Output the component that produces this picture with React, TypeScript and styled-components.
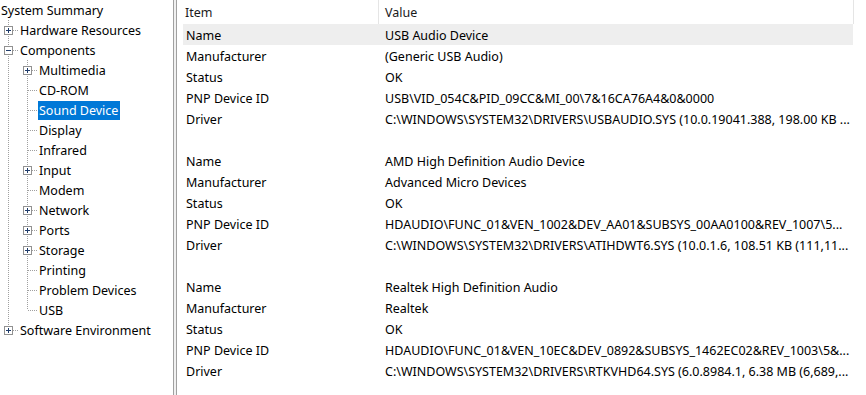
import React from 'react'
import styled, { createGlobalStyle } from 'styled-components'

const GlobalStyle = createGlobalStyle`
  html, body {
    margin: 0;
    padding: 0;
    background: #ffffff;
  }
  body {
    font-family: 'Noto Sans', 'Open Sans', sans-serif;
    font-size: 12.5px;
    color: #000000;
  }
`

const Window = styled.div`
  display: flex;
  width: 866px;
  height: 395px;
  overflow: hidden;
  background: #ffffff;
`

const TreePane = styled.div`
  width: 173px;
  flex: none;
  display: flex;
  flex-direction: column;
`

const Splitter = styled.div`
  width: 2px;
  flex: none;
  background: #f0f0f0;
  border-left: 1px solid #a0a0a0;
  border-right: 1px solid #a0a0a0;
`

const TreeRow = styled.div`
  display: flex;
  align-items: center;
  height: 20px;
`

const Gutter = styled.svg`
  width: 19px;
  height: 20px;
  flex: none;
  display: block;
`

const TreeLabel = styled.span<{ $selected?: boolean }>`
  height: 19px;
  line-height: 20px;
  padding: 0 2px 0 1px;
  white-space: nowrap;
  background: ${(p) => (p.$selected ? '#0078d7' : 'transparent')};
  color: ${(p) => (p.$selected ? '#ffffff' : '#000000')};
`

const ListPane = styled.div`
  flex: 1;
  padding-left: 6px;
  display: flex;
  flex-direction: column;
  min-width: 0;
`

const HeaderRow = styled.div`
  display: flex;
  height: 24px;
`

const HeaderCell = styled.div<{ $width: number; $pad: number }>`
  width: ${(p) => p.$width}px;
  flex: none;
  box-sizing: border-box;
  display: flex;
  align-items: center;
  padding-left: ${(p) => p.$pad}px;
  border-right: 1px solid #e5e5e5;
  color: #1a1a1a;
`

const DataRow = styled.div<{ $hot?: boolean }>`
  display: flex;
  height: 21px;
  line-height: 23px;
  width: 670px;
  background: ${(p) => (p.$hot ? '#eeeeee' : 'transparent')};
`

const Cell = styled.div<{ $width: number; $pad: number }>`
  width: ${(p) => p.$width}px;
  flex: none;
  box-sizing: border-box;
  padding-left: ${(p) => p.$pad}px;
  white-space: nowrap;
  overflow: hidden;
`

type Guide = 'pipe' | 'tee' | 'elbow'
type Expander = 'plus' | 'minus'

const GuideCell = ({ kind, box }: { kind?: Guide; box?: Expander }) => (
  <Gutter viewBox="0 0 19 20">
    {kind && (
      <line
        x1="8.5"
        y1="0"
        x2="8.5"
        y2={kind === 'elbow' ? 10 : 20}
        stroke="#a0a0a0"
        strokeDasharray="1 1"
      />
    )}
    {kind && kind !== 'pipe' && (
      <line x1={box ? 13 : 9} y1="10.5" x2="18" y2="10.5" stroke="#a0a0a0" strokeDasharray="1 1" />
    )}
    {box && (
      <g>
        <rect x="4.5" y="6.5" width="8" height="8" fill="#ffffff" stroke="#919191" />
        <line x1="6" y1="10.5" x2="11" y2="10.5" stroke="#1f3c6b" />
        {box === 'plus' && <line x1="8.5" y1="8" x2="8.5" y2="13" stroke="#1f3c6b" />}
      </g>
    )}
  </Gutter>
)

type Node = {
  label: string
  guides: { kind?: Guide; box?: Expander }[]
  selected?: boolean
}

const tree: Node[] = [
  { label: 'System Summary', guides: [] },
  { label: 'Hardware Resources', guides: [{ kind: 'tee', box: 'plus' }] },
  { label: 'Components', guides: [{ kind: 'tee', box: 'minus' }] },
  { label: 'Multimedia', guides: [{ kind: 'pipe' }, { kind: 'tee', box: 'plus' }] },
  { label: 'CD-ROM', guides: [{ kind: 'pipe' }, { kind: 'tee' }] },
  { label: 'Sound Device', guides: [{ kind: 'pipe' }, { kind: 'tee' }], selected: true },
  { label: 'Display', guides: [{ kind: 'pipe' }, { kind: 'tee' }] },
  { label: 'Infrared', guides: [{ kind: 'pipe' }, { kind: 'tee' }] },
  { label: 'Input', guides: [{ kind: 'pipe' }, { kind: 'tee', box: 'plus' }] },
  { label: 'Modem', guides: [{ kind: 'pipe' }, { kind: 'tee' }] },
  { label: 'Network', guides: [{ kind: 'pipe' }, { kind: 'tee', box: 'plus' }] },
  { label: 'Ports', guides: [{ kind: 'pipe' }, { kind: 'tee', box: 'plus' }] },
  { label: 'Storage', guides: [{ kind: 'pipe' }, { kind: 'tee', box: 'plus' }] },
  { label: 'Printing', guides: [{ kind: 'pipe' }, { kind: 'tee' }] },
  { label: 'Problem Devices', guides: [{ kind: 'pipe' }, { kind: 'tee' }] },
  { label: 'USB', guides: [{ kind: 'pipe' }, { kind: 'elbow' }] },
  { label: 'Software Environment', guides: [{ kind: 'elbow', box: 'plus' }] },
]

const devices: [string, string, string, string, string][] = [
  [
    'USB Audio Device',
    '(Generic USB Audio)',
    'OK',
    'USB\\VID_054C&PID_09CC&MI_00\\7&16CA76A4&0&0000',
    'C:\\WINDOWS\\SYSTEM32\\DRIVERS\\USBAUDIO.SYS (10.0.19041.388, 198.00 KB ...',
  ],
  [
    'AMD High Definition Audio Device',
    'Advanced Micro Devices',
    'OK',
    'HDAUDIO\\FUNC_01&VEN_1002&DEV_AA01&SUBSYS_00AA0100&REV_1007\\5...',
    'C:\\WINDOWS\\SYSTEM32\\DRIVERS\\ATIHDWT6.SYS (10.0.1.6, 108.51 KB (111,11...',
  ],
  [
    'Realtek High Definition Audio',
    'Realtek',
    'OK',
    'HDAUDIO\\FUNC_01&VEN_10EC&DEV_0892&SUBSYS_1462EC02&REV_1003\\5&...',
    'C:\\WINDOWS\\SYSTEM32\\DRIVERS\\RTKVHD64.SYS (6.0.8984.1, 6.38 MB (6,689,...',
  ],
]

const itemNames = ['Name', 'Manufacturer', 'Status', 'PNP Device ID', 'Driver']

const rows: [string, string][] = []
devices.forEach((d, i) => {
  if (i > 0) rows.push(['', ''])
  itemNames.forEach((n, j) => rows.push([n, d[j]]))
})

export default function App() {
  return (
    <>
      <GlobalStyle />
      <Window>
        <TreePane>
          {tree.map((node) => (
            <TreeRow key={node.label}>
              {node.guides.map((g, i) => (
                <GuideCell key={i} kind={g.kind} box={g.box} />
              ))}
              <TreeLabel $selected={node.selected}>{node.label}</TreeLabel>
            </TreeRow>
          ))}
        </TreePane>
        <Splitter />
        <ListPane>
          <HeaderRow>
            <HeaderCell $width={196} $pad={2}>
              Item
            </HeaderCell>
            <HeaderCell $width={475} $pad={6}>
              Value
            </HeaderCell>
          </HeaderRow>
          {rows.map(([item, value], i) => (
            <DataRow key={i} $hot={i === 0}>
              <Cell $width={196} $pad={3}>
                {item}
              </Cell>
              <Cell $width={474} $pad={6}>
                {value}
              </Cell>
            </DataRow>
          ))}
        </ListPane>
      </Window>
    </>
  )
}
